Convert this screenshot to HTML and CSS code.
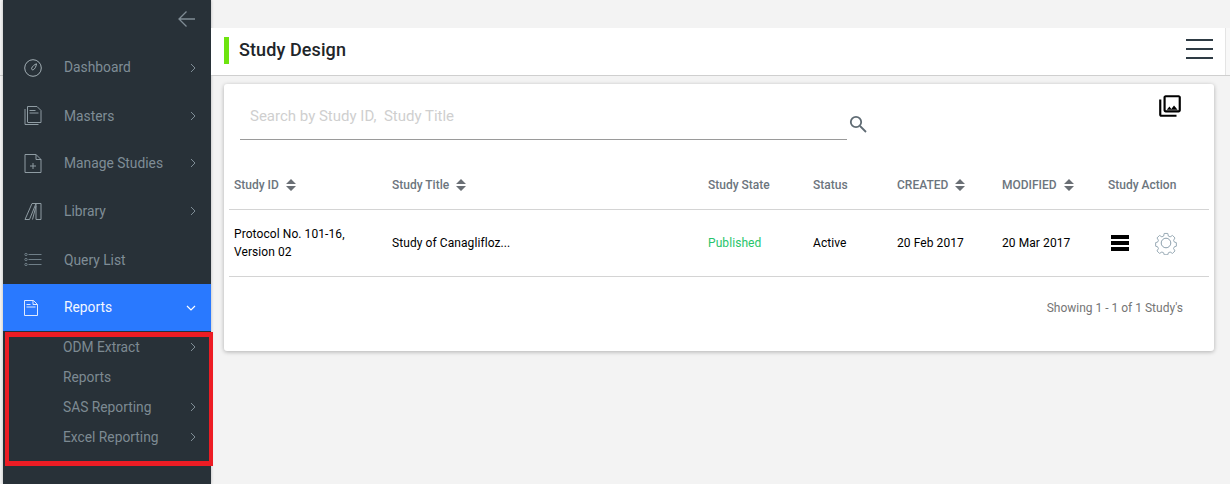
FILE: index.html
```html
<!DOCTYPE html>
<html lang="en">
<head>
<meta charset="utf-8">
<title>Study Design</title>
<link rel="stylesheet" href="styles.css">
</head>
<body>
<div class="page">
  <aside class="sidebar">
    <div class="back">
      <svg width="18" height="18" viewBox="0 0 18 18" fill="none" stroke="#7f8c94" stroke-width="1.3"><path d="M17 9H1.5M8.500 1.500 1 9l7.500 7.500"/></svg>
    </div>
    <nav class="menu">
      <a class="item h49">
        <svg class="ico" width="18" height="18" viewBox="0 0 18 18" fill="none" stroke="#a3afb5" stroke-width="1"><circle cx="9" cy="9" r="8.300"/><path d="M12.500 4.800c-.3 2.600-1.600 5.200-3.300 6-1 .4-2-.6-1.500-1.700.7-1.700 2.700-3.600 4.800-4.300z"/></svg>
        <span class="label up">Dashboard</span>
        <svg class="chev" width="6" height="10" viewBox="0 0 6 10" fill="none" stroke="#7e8c95" stroke-width="1"><path d="m1 1 4 4-4 4"/></svg>
      </a>
      <a class="item h47">
        <svg class="ico" width="17" height="19" viewBox="0 0 17 19" fill="none" stroke="#8f9ca3" stroke-width="1"><path d="M3 16V.5h9.500l4 4V16.500H3M.5 3v15.500h13.500M5 4.500h6M5 7h9"/></svg>
        <span class="label">Masters</span>
        <svg class="chev" width="6" height="10" viewBox="0 0 6 10" fill="none" stroke="#7e8c95" stroke-width="1"><path d="m1 1 4 4-4 4"/></svg>
      </a>
      <a class="item h48">
        <svg class="ico" width="17" height="19" viewBox="0 0 17 19" fill="none" stroke="#8f9ca3" stroke-width="1"><path d="M.5.5h11l5 5v13H.5zM11.500.5v5h5M8.500 9v6M5.500 12h6"/></svg>
        <span class="label">Manage Studies</span>
        <svg class="chev" width="6" height="10" viewBox="0 0 6 10" fill="none" stroke="#7e8c95" stroke-width="1"><path d="m1 1 4 4-4 4"/></svg>
      </a>
      <a class="item h48">
        <svg class="ico" width="17" height="17" viewBox="0 0 17 17" fill="none" stroke="#8f9ca3" stroke-width="1"><path d="M11.500.5h5v16h-5zM7.500.5h4L5 16.500H.5zM11.500 3 8 16.500"/></svg>
        <span class="label">Library</span>
        <svg class="chev" width="6" height="10" viewBox="0 0 6 10" fill="none" stroke="#7e8c95" stroke-width="1"><path d="m1 1 4 4-4 4"/></svg>
      </a>
      <a class="item h48">
        <svg class="ico" width="17" height="13" viewBox="0 0 17 13" fill="none" stroke="#6f7e87" stroke-width="1"><circle cx="1.500" cy="1.500" r="1.200"/><circle cx="1.500" cy="6.500" r="1.200"/><circle cx="1.500" cy="11.500" r="1.200"/><path d="M4 1.500h13M4 6.500h13M4 11.500h13"/></svg>
        <span class="label down">Query List</span>
      </a>
      <a class="item active">
        <svg class="ico" width="14" height="16" viewBox="0 0 14 16" fill="none" stroke="#dfeaff" stroke-width="1"><path d="M.5.500h9l4 4v11H.5zM9 .5v4h4.500M2.500 4.500h4M2.500 7h9"/></svg>
        <span class="label up">Reports</span>
        <svg class="chev" width="10" height="6" viewBox="0 0 10 6" fill="none" stroke="#fff" stroke-width="1.200"><path d="m1 1 4 4 4-4"/></svg>
      </a>
      <div class="sub">
        <a class="subitem"><span>ODM Extract</span><svg width="6" height="10" viewBox="0 0 6 10" fill="none" stroke="#7e8c95" stroke-width="1"><path d="m1 1 4 4-4 4"/></svg></a>
        <a class="subitem"><span>Reports</span></a>
        <a class="subitem"><span>SAS Reporting</span><svg width="6" height="10" viewBox="0 0 6 10" fill="none" stroke="#7e8c95" stroke-width="1"><path d="m1 1 4 4-4 4"/></svg></a>
        <a class="subitem"><span>Excel Reporting</span><svg width="6" height="10" viewBox="0 0 6 10" fill="none" stroke="#7e8c95" stroke-width="1"><path d="m1 1 4 4-4 4"/></svg></a>
      </div>
    </nav>
  </aside>

  <main class="main">
    <header class="topbar">
      <div class="title"><h1>Study Design</h1></div>
      <div class="burger"><i></i><i></i><i></i></div>
    </header>
    <section class="card">
      <div class="tools">
        <div class="search">Search by Study ID,&nbsp; Study Title</div>
        <svg class="mag" width="18" height="18" viewBox="0 0 18 18" fill="none" stroke="#5f6b73" stroke-width="1.800"><circle cx="7" cy="7" r="5.200"/><path d="m11 11 6 6"/></svg>
        <svg class="gallery" width="26" height="26" viewBox="0 0 24 24" fill="#000"><path d="M22 16V4c0-1.100-.9-2-2-2H8c-1.100 0-2 .9-2 2v12c0 1.100.9 2 2 2h12c1.100 0 2-.9 2-2zm-2 0H8V4h12v12zm-8.500-3.500 1.700 2.200 2.500-3.200 3.300 4H9l2.500-3zM2 6v14c0 1.100.9 2 2 2h14v-2H4V6H2z"/></svg>
      </div>
      <table class="grid">
        <colgroup>
          <col class="c1"><col class="c2"><col class="c3"><col class="c4"><col class="c5"><col class="c6"><col class="c7">
        </colgroup>
        <thead>
          <tr>
            <th>Study ID<svg class="sort" width="10" height="12" viewBox="0 0 10 12" fill="#6a6f75"><path d="M5 0l5 5H0zM0 7h10l-5 5z"/></svg></th>
            <th>Study Title<svg class="sort" width="10" height="12" viewBox="0 0 10 12" fill="#6a6f75"><path d="M5 0l5 5H0zM0 7h10l-5 5z"/></svg></th>
            <th>Study State</th>
            <th>Status</th>
            <th>CREATED<svg class="sort" width="10" height="12" viewBox="0 0 10 12" fill="#6a6f75"><path d="M5 0l5 5H0zM0 7h10l-5 5z"/></svg></th>
            <th>MODIFIED<svg class="sort" width="10" height="12" viewBox="0 0 10 12" fill="#6a6f75"><path d="M5 0l5 5H0zM0 7h10l-5 5z"/></svg></th>
            <th>Study Action</th>
          </tr>
        </thead>
        <tbody>
          <tr>
            <td>Protocol No. 101-16,<br>Version 02</td>
            <td>Study of Canaglifloz...</td>
            <td class="ok">Published</td>
            <td>Active</td>
            <td>20 Feb 2017</td>
            <td>20 Mar 2017</td>
            <td>
              <div class="actions">
                <div class="stack"><i></i><i></i><i></i></div>
                <svg width="24" height="24" viewBox="0 0 24 24" fill="none" stroke="#8da0ad" stroke-width="1"><circle cx="12" cy="12" r="4.800"/><path d="M10 1.500h4l.6 2.900 2 .9 2.600-1.600 2.800 2.800-1.600 2.600.9 2 2.200.6v4l-2.200.6-.9 2 1.600 2.600-2.800 2.800-2.600-1.600-2 .9-.6 2.200h-4l-.6-2.200-2-.9-2.600 1.600-2.800-2.800 1.600-2.600-.9-2-2.200-.6v-4l2.200-.6.9-2-1.600-2.600 2.800-2.800 2.600 1.600 2-.9z" transform="translate(1.200 1.100) scale(.9)"/></svg>
              </div>
            </td>
          </tr>
        </tbody>
      </table>
      <div class="count">Showing 1 - 1 of 1 Study's</div>
    </section>
  </main>
</div>
<div class="annotation"></div>
</body>
</html>
```
FILE: styles.css
```css
* { box-sizing: border-box; }
html, body { margin: 0; height: 100%; }
body {
  background: linear-gradient(#cfcfcf, #cfcfcf) 0 75px / 3px 1px no-repeat, #f3f3f3;
  font-family: Roboto, "Liberation Sans", sans-serif;
  overflow: hidden;
  position: relative;
  width: 1230px;
  height: 484px;
}
.page { display: flex; height: 484px; padding-left: 3px; }

.sidebar {
  width: 208px;
  flex: none;
  background: #283138;
  display: flex;
  flex-direction: column;
  box-shadow: 0 0 3px rgba(0,0,0,.25);
}
.back { height: 43px; display: flex; justify-content: flex-end; align-items: flex-start; padding: 10px 15px 0 0; }
.menu { display: flex; flex-direction: column; }
.item {
  display: flex;
  align-items: center;
  height: 48px;
  padding-left: 21px;
  padding-right: 15px;
  font-size: 13.8px;
  color: #7f8d96;
}
.h49 { height: 49px; }
.h48 { height: 48px; }
.h47 { height: 47px; }
.ico { flex: none; width: 18px; }
.label { flex: 1; margin-left: 22px; }
.label.up { padding-bottom: 2px; }
.label.down { padding-top: 1px; }
.chev { flex: none; }
.item.active { background: #2979ff; color: #f2f6ff; height: 47px; margin-top: 1px; }
.item.active .ico { width: 14px; margin-right: 4px; }
.sub { display: flex; flex-direction: column; padding-top: 1px; }
.subitem {
  height: 30px;
  display: flex;
  align-items: center;
  justify-content: space-between;
  padding: 0 15px 0 60px;
  font-size: 13.8px;
  color: #7d8a92;
}

.main { flex: 1; min-width: 0; padding-top: 28px; display: flex; flex-direction: column; }
.topbar {
  height: 48px;
  width: 1019px;
  background: linear-gradient(to right, #fff 1014px, #e4e4e4 1014px, #e4e4e4 1015px, #f8f8f8 1015px);
  border-bottom: 1px solid #cfcfcf;
  display: flex;
  align-items: center;
  justify-content: space-between;
  padding: 0 17px 0 13px;
  flex: none;
}
.title { border-left: 5px solid #6ee40f; height: 27px; padding-left: 10px; display: flex; align-items: center; margin-top: -2px; }
h1 { margin: 0; font-size: 18px; font-weight: 500; color: #212529; letter-spacing: .1px; position: relative; top: -1px; }
.burger { display: flex; flex-direction: column; gap: 7px; width: 27px; margin-top: -6px; }
.burger i { display: block; height: 2px; background: #2e3b44; }

.card {
  margin: 8px 0 0 13px;
  width: 990px;
  height: 267px;
  background: #fff;
  border-radius: 3px;
  box-shadow: 0 1px 4px rgba(0,0,0,.28);
  padding: 0 5px;
  flex: none;
}
.tools { height: 79px; display: flex; align-items: flex-start; padding: 0 0 0 11px; }
.search {
  width: 607px;
  height: 44px;
  margin-top: 12px;
  border-bottom: 1px solid #9a9a9a;
  font-size: 15px;
  color: #cfcfcf;
  padding: 11px 0 0 10px;
}
.mag { margin: 31px 0 0 2px; }
.gallery { margin: 9px 0 0 290px; }
.grid { width: 980px; border-collapse: collapse; table-layout: fixed; font-size: 12px; }
.c1 { width: 158px; } .c2 { width: 316px; } .c3 { width: 105px; } .c4 { width: 84px; }
.c5 { width: 105px; } .c6 { width: 106px; } .c7 { width: 106px; }
th {
  height: 46px;
  padding: 0 0 1px 5px;
  text-align: left;
  font-weight: 500;
  color: #6c757d;
  border-bottom: 1px solid #d4d4d4;
  vertical-align: middle;
  white-space: nowrap;
}
.sort { vertical-align: -2px; margin-left: 7px; }
td {
  height: 67px;
  padding: 0 0 0 5px;
  color: #000;
  line-height: 18px;
  letter-spacing: .08px;
  border-bottom: 1px solid #d4d4d4;
  vertical-align: middle;
  font-weight: 400;
}
td.ok { color: #27c46b; }
.actions { display: flex; align-items: center; gap: 25px; margin-left: 3px; }
.stack { display: flex; flex-direction: column; gap: 2px; width: 18px; }
.stack i { display: block; height: 4px; background: #000; }
.count { text-align: right; font-size: 12px; color: #757575; padding: 24px 26px 0 0; }

.annotation {
  position: absolute;
  left: 5px;
  top: 332px;
  width: 208px;
  height: 134px;
  border: 4px solid #ed1c24;
  border-width: 5px 4px 5px 4px;
}
```
